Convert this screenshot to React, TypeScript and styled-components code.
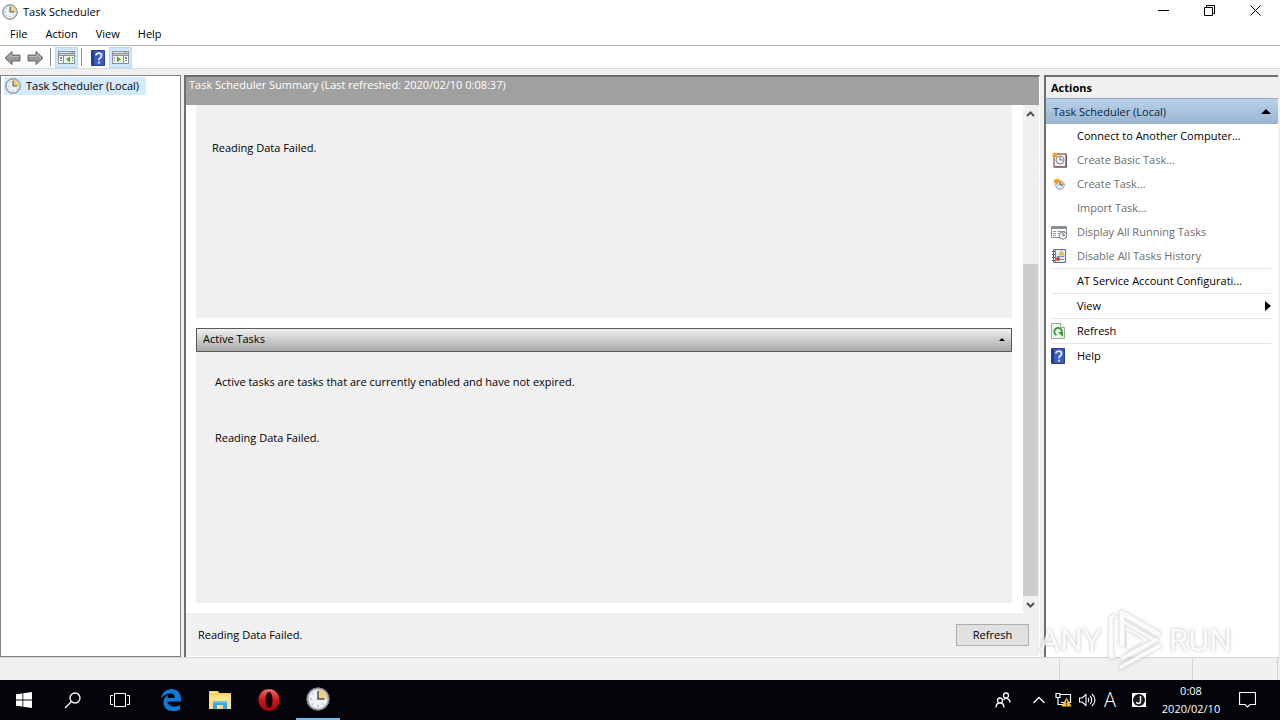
import React from "react";
import styled, { createGlobalStyle } from "styled-components";

const Global = createGlobalStyle`
  *, *::before, *::after { box-sizing: border-box; }
  body { margin: 0; background: #f0f0f0; color: #000; font: 11px/16px "Open Sans", "Noto Sans", sans-serif; }
  button { font: inherit; color: inherit; border: 0; padding: 0; margin: 0; background: none; text-align: left; }
  h1, h2, p, ul { margin: 0; padding: 0; font: inherit; list-style: none; }
  svg { display: block; flex: none; }
`;

const Screen = styled.div`
  position: relative;
  display: flex;
  flex-direction: column;
  min-height: 100vh;
`;

const TitleBar = styled.header`
  display: flex;
  align-items: center;
  gap: 5px;
  height: 24px;
  padding: 0 2px;
  background: #fff;
`;

const WindowTitle = styled.h1`
  flex: 1;
`;

const CaptionGroup = styled.div`
  display: flex;
`;

const CaptionButton = styled.button`
  display: flex;
  align-items: center;
  justify-content: center;
  width: 46px;
  height: 20px;
  margin-bottom: 4px;
`;

const MenuBar = styled.nav`
  display: flex;
  height: 22px;
  padding-left: 1px;
  background: #fff;
  border-bottom: 1px solid #b4b4b4;
`;

const MenuButton = styled.button`
  padding: 0 9px 2px;
`;

const ToolBar = styled.div`
  display: flex;
  align-items: flex-end;
  height: 23px;
  padding-left: 1px;
  background: #fff;
  border-bottom: 1px solid #d8d8d8;
`;

const ToolButton = styled.button<{ $on?: boolean }>`
  display: flex;
  align-items: center;
  justify-content: center;
  width: 23px;
  height: 21px;
  border: 1px solid ${(p) => (p.$on ? "#b4dcf8" : "transparent")};
  background: ${(p) => (p.$on ? "#cde8ff" : "transparent")};
`;

const ToolDivider = styled.span`
  width: 1px;
  height: 18px;
  margin: 0 4px 2px 3px;
  background: #8c8c8c;
`;

const Panes = styled.main`
  display: grid;
  grid-template-columns: 181px minmax(0, 1fr) 234px;
  column-gap: 4px;
  flex: 1;
  padding: 6px 2px 0 0;
`;

const TreePane = styled.aside`
  background: #fff;
  border: 1px solid #828282;
  padding: 1px 3px;
`;

const TreeItem = styled.button`
  display: flex;
  align-items: center;
  gap: 5px;
  height: 18px;
  padding: 0 7px 0 1px;
  background: #d4eaff;
`;

const Summary = styled.section`
  display: flex;
  flex-direction: column;
  border: solid #6e6e6e;
  border-width: 2px 0 0 2px;
  border-right: 1px solid #fff;
  margin-left: -1px;
`;

const SummaryTitle = styled.h2`
  height: 28px;
  padding-left: 3px;
  background: #a0a0a0;
  color: #fff;
`;

const ScrollArea = styled.div`
  display: flex;
  flex: 1;
  background: #fff;
`;

const Sections = styled.div`
  display: grid;
  flex: 1;
  grid-template-rows: 213fr 275fr;
  gap: 10px;
  padding: 0 11px 10px 10px;
`;

const StatusSection = styled.section`
  padding: 35px 16px 0;
  background: #f0f0f0;
`;

const ActiveSection = styled.section`
  background: #f0f0f0;
`;

const SectionHeader = styled.button`
  display: flex;
  align-items: center;
  justify-content: space-between;
  width: 100%;
  height: 24px;
  padding: 0 6px 2px;
  border: 1px solid #5a5a5a;
  background: linear-gradient(#f0f0f0, #a8a8a8);
`;

const SectionBody = styled.div`
  display: grid;
  gap: 40px;
  padding: 22px 19px;
`;

const ScrollBar = styled.div`
  display: flex;
  flex-direction: column;
  width: 16px;
  background: #f0f0f0;
`;

const ScrollButton = styled.button`
  display: flex;
  align-items: center;
  justify-content: center;
  width: 15px;
  height: 17px;
`;

const ScrollTrack = styled.div`
  display: flex;
  flex: 1;
  flex-direction: column;
  justify-content: flex-end;
`;

const ScrollThumb = styled.div`
  width: 15px;
  height: 70%;
  background: #cdcdcd;
`;

const SummaryFooter = styled.footer`
  display: flex;
  align-items: center;
  justify-content: space-between;
  height: 44px;
  padding: 0 10px 0 12px;
  border-bottom: 1px solid #fff;
`;

const PushButton = styled.button`
  width: 73px;
  height: 22px;
  border: 1px solid #adadad;
  background: #e1e1e1;
  text-align: center;
`;

const ActionsPane = styled.aside`
  background: #fff;
  border: solid #6e6e6e;
  border-width: 2px 0 0 2px;
`;

const ActionsTitle = styled.h2`
  height: 22px;
  padding: 3px 5px 2px;
  background: #f0f0f0;
  border-bottom: 1px solid #98a8b4;
  font-weight: 700;
`;

const ActionsGroup = styled.button`
  display: flex;
  align-items: center;
  justify-content: space-between;
  width: 100%;
  height: 25px;
  padding: 0 7px;
  background: linear-gradient(#b9d1ea, #99b4d1);
  color: #0a1e3c;
`;

const ActionRow = styled.li<{ $ruled?: boolean }>`
  margin: 0 7px 0 5px;
  border-top: ${(p) => (p.$ruled ? "1px solid #e4e4e4" : "0")};
`;

const ActionButton = styled.button<{ $dim?: boolean }>`
  display: grid;
  grid-template-columns: 16px 1fr auto;
  align-items: center;
  column-gap: 10px;
  width: 100%;
  height: 24px;
  white-space: nowrap;
  color: ${(p) => (p.$dim ? "#6d6d6d" : "#000")};
`;

const StatusBar = styled.footer`
  display: flex;
  justify-content: flex-end;
  height: 23px;
  border-top: 1px solid #d8d8d8;
`;

const StatusCell = styled.div<{ $w: number }>`
  width: ${(p) => p.$w}px;
  border-left: 1px solid #d2d2d2;
`;

const TaskBar = styled.footer`
  display: flex;
  align-items: center;
  justify-content: space-between;
  height: 40px;
  padding-right: 8px;
  background: #020409;
  color: #fff;
`;

const TaskGroup = styled.div`
  display: flex;
  height: 40px;
`;

const TaskButton = styled.button<{ $w: number; $active?: boolean }>`
  display: flex;
  align-items: center;
  justify-content: center;
  width: ${(p) => p.$w}px;
  height: 40px;
  border-bottom: ${(p) => (p.$active ? "2px solid #76b9ed" : "0")};
`;

const InputMode = styled.span`
  font-size: 20px;
  font-weight: 300;
  line-height: 24px;
`;

const Clock = styled.time`
  width: 62px;
  padding-top: 2px;
  line-height: 18px;
  text-align: center;
`;

const Watermark = styled.div`
  position: absolute;
  right: 48px;
  bottom: 48px;
  display: flex;
  align-items: center;
  gap: 5px;
  color: #fbfbfb;
  font: 32px/64px Roboto, "Liberation Sans", sans-serif;
  filter: drop-shadow(0 0 1px rgba(120, 120, 120, 0.5)) drop-shadow(0 0 2px rgba(120, 120, 120, 0.2));
  opacity: 0.8;
  pointer-events: none;
`;

const ClockIcon = ({ size = 16 }: { size?: number }) => (
  <svg width={size} height={size} viewBox="0 0 24 24">
    <circle cx="12" cy="12" r="11.2" fill="#a9b0b6" stroke="#7c858c" strokeWidth="1" />
    <circle cx="12" cy="12" r="9.4" fill="#eef2f6" />
    <path d="M12 12V2.6A9.4 9.4 0 0 1 21.4 12z" fill="#edcf85" />
    <path d="M12 4v8h6.5" fill="none" stroke="#45505c" strokeWidth="1.5" />
    <path d="M12 20v-2M4 12h2M6.3 6.3l1.2 1.2M6.3 17.7l1.2-1.2M17.7 17.7l-1.2-1.2" stroke="#8d979f" strokeWidth="1" />
  </svg>
);

const ArrowIcon = ({ back }: { back?: boolean }) => (
  <svg width="17" height="16" viewBox="0 0 17 16">
    <path
      d={back ? "M1 8l7-6.5V5h8v6H8v3.5z" : "M16 8L9 1.5V5H1v6h8v3.5z"}
      fill="#989898"
      stroke="#666"
      strokeWidth="1"
    />
    <path d={back ? "M4 7.5l3-3V6.5h8" : "M2 6.5h8V4l4 4"} fill="none" stroke="#bcbcbc" />
  </svg>
);

const PaneIcon = ({ right }: { right?: boolean }) => (
  <svg width="17" height="13" viewBox="0 0 17 14" preserveAspectRatio="none" shapeRendering="crispEdges">
    <path d="M0 0h17v14H0z" fill="#8b9399" />
    <path d="M1 1h11v1H1zM13 1h1v1h-1zM15 1h1v1h-1z" fill="#e8ecee" />
    <path d="M1 3h15v1H1z" fill="#c8ced2" />
    <path d="M1 5h15v8H1z" fill="#fff" />
    <path d={right ? "M1 5h10v8H1z" : "M6 5h10v8H6z"} fill="#eef6ea" />
    <path d={right ? "M11 5h1v8h-1zM2 6h1v1H2zM2 8h1v1H2zM2 10h1v1H2z" : "M5 5h1v8H5zM14 6h1v1h-1zM14 8h1v1h-1zM14 10h1v1h-1z"} fill="#8b9399" />
    <path
      d={right ? "M13 6h2v1h-2zM13 8h2v1h-2zM13 10h2v1h-2z" : "M2 6h2v1H2zM2 8h2v1H2zM2 10h2v1H2z"}
      fill="#647d95"
    />
    <path d={right ? "M5 6l4 3-4 3z" : "M12 6L8 9l4 3z"} fill="#4ba536" shapeRendering="auto" />
  </svg>
);

const HelpIcon = () => (
  <svg width="14" height="16" viewBox="0 0 14 16">
    <path d="M.5.5h13v15H.5z" fill="#3d5cc0" stroke="#2a4090" />
    <path d="M1 1h2v14H1z" fill="#243c8c" />
    <path d="M5 5.5c0-3.3 5.600-3.300 5.600 0C10.600 8 8 7.600 8 10.200" fill="none" stroke="#e4eaff" strokeWidth="1.800" />
    <circle cx="8" cy="12.700" r="1.100" fill="#e4eaff" />
  </svg>
);

const BasicTaskIcon = () => (
  <svg width="16" height="16" viewBox="0 0 16 16">
    <path d="M3 2h12v13H3z" fill="#f4f1ee" stroke="#8f6f6c" strokeWidth="1.4" />
    <path d="M4 14.8h11.5V3" fill="none" stroke="#6a5856" />
    <circle cx="9" cy="8" r="4" fill="#f1f3f5" stroke="#7c858c" />
    <path d="M9 5.5V8h2.5" fill="none" stroke="#50585f" />
    <path d="M3.5 0l1 2 2.2-.5L5.5 3.5l1 2-2.200-.5L2.800 7l-.3-2.300L0 4l2-1.300L1.500.5l1.600.8z" fill="#f0a22c" />
  </svg>
);

const TaskIcon = () => (
  <svg width="16" height="16" viewBox="0 0 16 16">
    <circle cx="9" cy="9" r="4.3" fill="#dbeaf2" stroke="#8ba4b5" />
    <path d="M9 9V4.7A4.3 4.3 0 0 1 13.3 9z" fill="#f3bd57" />
    <path d="M9 6v3h3" fill="none" stroke="#46617a" />
    <path d="M5 2l1.3 1.5L8.5 2.5 8 4.8 10 6 7.5 6.3 6.5 9 5 6.8 2.5 7.5 3.5 5.3 2 3.5l2.5.2z" fill="#f09a20" />
  </svg>
);

const RunningIcon = () => (
  <svg width="17" height="15" viewBox="0 0 17 15">
    <path d="M.5 1.5h15v11H.5z" fill="#fff" stroke="#87919a" />
    <path d="M1 2h14v2H1z" fill="#87919a" />
    <path d="M2 6.5h3M6.5 6.5H14M2 8.5h3M6.5 8.5H9M2 10.5h3" stroke="#8a949c" />
    <circle cx="12" cy="10.5" r="3.7" fill="#f2f5f2" stroke="#78837e" />
    <path d="M12 8v2.5h2" fill="none" stroke="#4e7561" />
  </svg>
);

const HistoryIcon = () => (
  <svg width="16" height="16" viewBox="0 0 16 16">
    <path d="M2.5 1.5h12v13h-12z" fill="#e4edf8" stroke="#5f6e91" />
    <path d="M4.5 2v12" stroke="#7886a5" />
    <path d="M1 3.5h3M1 6.5h3M1 9.5h3M1 12.5h3" stroke="#555f75" />
    <path d="M10.5 2.5l2.5 4.5H8z" fill="#f5d02b" stroke="#bd9a18" strokeWidth=".5" />
    <path d="M6 8.5h7M9 11.5h4" stroke="#7292bd" />
    <circle cx="7" cy="11" r="2" fill="#cf3d32" />
  </svg>
);

const RefreshIcon = () => (
  <svg width="14" height="16" viewBox="0 0 14 16">
    <path d="M.5.5h9l4 4v11H.5z" fill="#edf6ea" stroke="#98ad94" />
    <path d="M9.5.5v4h4" fill="#fff" stroke="#98ad94" />
    <path d="M5.5 12.2a3.8 3.8 0 1 1 4.2-.7" fill="none" stroke="#379a38" strokeWidth="1.8" />
    <path d="M7 9h5v5z" fill="#379a38" />
  </svg>
);

const Triangle = ({ right, size = 10 }: { right?: boolean; size?: number }) => (
  <svg width={right ? 6 : size} height={right ? 10 : size / 2} viewBox={right ? "0 0 6 10" : "0 0 10 5"}>
    <path d={right ? "M0 0l6 5-6 5z" : "M5 0l5 5H0z"} fill="#000" />
  </svg>
);

const Chevron = ({ down }: { down?: boolean }) => (
  <svg width="9" height="6" viewBox="0 0 9 6">
    <path d={down ? "M1 1l3.5 3.5L8 1" : "M1 5l3.5-3.5L8 5"} fill="none" stroke="#505050" strokeWidth="2" />
  </svg>
);

const Line = ({ d, w = 20, h = 20, sw = 1.3 }: { d: string; w?: number; h?: number; sw?: number }) => (
  <svg width={w} height={h} viewBox={`0 0 ${w} ${h}`}>
    <path d={d} fill="none" stroke="currentColor" strokeWidth={sw} />
  </svg>
);

const EdgeIcon = () => (
  <svg width="20" height="22" viewBox="0 0 20 22">
    <path
      d="M0 9.8C1 3.5 5 0 10.5 0 16.5 0 20 4.5 20 10v2.5H6.5c.2 3.5 3.2 5 6.5 5 2.4 0 4.3-.6 6-1.6v4.5C17 21.5 14.5 22 12 22 6 22 2.5 18.5 2.5 13.5c0-3.5 2-6.4 5-7.8-.6.9-1 2-1.1 3.3h7.5c0-2.7-1.5-4.5-4.6-4.5C5.5 4.5 2 6.5 0 9.8z"
      fill="#0c7bdc"
    />
  </svg>
);

const FolderIcon = () => (
  <svg width="22" height="20" viewBox="0 0 22 20">
    <path d="M0 1h9l1.5 2H22v16H0z" fill="#f4cf62" />
    <path d="M0 5h22v14H0z" fill="#fce08a" />
    <path d="M1 2h6v1H1z" fill="#fff3c0" />
    <path d="M4 19v-8h14v8h-4v-4H8v4z" fill="#38a7df" />
    <path d="M4 11h14v2H4z" fill="#6cc6ee" />
  </svg>
);

const OperaIcon = () => (
  <svg width="22" height="22" viewBox="0 0 22 22">
    <defs>
      <linearGradient id="opera" x2="0" y2="1">
        <stop stopColor="#f26a64" />
        <stop offset=".5" stopColor="#d5151b" />
        <stop offset="1" stopColor="#9c0710" />
      </linearGradient>
    </defs>
    <ellipse cx="11" cy="11" rx="10.5" ry="11" fill="url(#opera)" />
    <ellipse cx="11" cy="11" rx="3.6" ry="8" fill="#12040a" />
  </svg>
);

const NetworkIcon = () => (
  <svg width="17" height="16" viewBox="0 0 17 16">
    <path d="M5 2.5h10.5v8H6M1 1.5h4v4H1zM3 5.5v7h6" fill="none" stroke="#fff" strokeWidth="1.2" />
    <path d="M11.5 5.5l5 9h-10z" fill="#f8c524" />
    <path d="M11.5 8.5v3M11.5 12.5v1" stroke="#191300" strokeWidth="1.2" />
  </svg>
);

const ImeIcon = () => (
  <svg width="14" height="14" viewBox="0 0 14 14">
    <path d="M0 0h14v14H0z" fill="#fff" />
    <circle cx="7" cy="7" r="6" fill="#141414" />
    <path d="M8.5 3v5.5c0 2.5-3.5 2.5-4 .5" fill="none" stroke="#fff" strokeWidth="1.5" />
  </svg>
);

const WatermarkMark = () => (
  <svg width="57" height="64" viewBox="0 0 57 64">
    <g fill="none" stroke="#fbfbfb" strokeLinejoin="round">
      <path d="M8 7L4 10v39l4-1" strokeWidth="4" />
      <path d="M15 38V5l38 22" strokeWidth="5" />
      <path d="M15 13l34 20" strokeWidth="3" />
      <path d="M14 51l37-20" strokeWidth="4" />
      <path d="M14 59l38-21" strokeWidth="4" strokeLinecap="round" />
      <path d="M20 24l15 9-15 9z" fill="#fbfbfb" strokeWidth="1" />
    </g>
  </svg>
);

type Action = { label: string; icon?: React.ReactNode; dim?: boolean; ruled?: boolean; more?: boolean };

const actions: Action[] = [
  { label: "Connect to Another Computer..." },
  { label: "Create Basic Task...", icon: <BasicTaskIcon />, dim: true },
  { label: "Create Task...", icon: <TaskIcon />, dim: true },
  { label: "Import Task...", dim: true },
  { label: "Display All Running Tasks", icon: <RunningIcon />, dim: true },
  { label: "Disable All Tasks History", icon: <HistoryIcon />, dim: true },
  { label: "AT Service Account Configurati...", ruled: true },
  { label: "View", ruled: true, more: true },
  { label: "Refresh", icon: <RefreshIcon />, ruled: true },
  { label: "Help", icon: <HelpIcon />, ruled: true },
];

export default function App() {
  return (
    <Screen>
      <Global />
      <TitleBar>
        <ClockIcon />
        <WindowTitle>Task Scheduler</WindowTitle>
        <CaptionGroup>
          <CaptionButton aria-label="Minimize">
            <Line w={11} h={11} sw={1} d="M0 5.5h11" />
          </CaptionButton>
          <CaptionButton aria-label="Restore">
            <Line w={11} h={11} sw={1} d="M.5 2.5h8v8h-8zM2.5 2.5v-2h8v8h-2" />
          </CaptionButton>
          <CaptionButton aria-label="Close">
            <Line w={11} h={11} sw={1} d="M.5.5l10 10M10.5.5l-10 10" />
          </CaptionButton>
        </CaptionGroup>
      </TitleBar>
      <MenuBar>
        {["File", "Action", "View", "Help"].map((m) => (
          <MenuButton key={m}>{m}</MenuButton>
        ))}
      </MenuBar>
      <ToolBar>
        <ToolButton aria-label="Back"><ArrowIcon back /></ToolButton>
        <ToolButton aria-label="Forward"><ArrowIcon /></ToolButton>
        <ToolDivider />
        <ToolButton $on aria-label="Show or hide console tree"><PaneIcon /></ToolButton>
        <ToolDivider />
        <ToolButton aria-label="Help"><HelpIcon /></ToolButton>
        <ToolButton $on aria-label="Show or hide action pane"><PaneIcon right /></ToolButton>
      </ToolBar>
      <Panes>
        <TreePane>
          <TreeItem>
            <ClockIcon />
            Task Scheduler (Local)
          </TreeItem>
        </TreePane>
        <Summary>
          <SummaryTitle>Task Scheduler Summary (Last refreshed: 2020/02/10 0:08:37)</SummaryTitle>
          <ScrollArea>
            <Sections>
              <StatusSection>
                <p>Reading Data Failed.</p>
              </StatusSection>
              <ActiveSection>
                <SectionHeader>
                  Active Tasks
                  <Triangle size={6} />
                </SectionHeader>
                <SectionBody>
                  <p>Active tasks are tasks that are currently enabled and have not expired.</p>
                  <p>Reading Data Failed.</p>
                </SectionBody>
              </ActiveSection>
            </Sections>
            <ScrollBar>
              <ScrollButton aria-label="Scroll up"><Chevron /></ScrollButton>
              <ScrollTrack><ScrollThumb /></ScrollTrack>
              <ScrollButton aria-label="Scroll down"><Chevron down /></ScrollButton>
            </ScrollBar>
          </ScrollArea>
          <SummaryFooter>
            <p>Reading Data Failed.</p>
            <PushButton>Refresh</PushButton>
          </SummaryFooter>
        </Summary>
        <ActionsPane>
          <ActionsTitle>Actions</ActionsTitle>
          <ActionsGroup>
            Task Scheduler (Local)
            <Triangle />
          </ActionsGroup>
          <ul>
            {actions.map((a) => (
              <ActionRow key={a.label} $ruled={a.ruled}>
                <ActionButton $dim={a.dim}>
                  <span>{a.icon}</span>
                  <span>{a.label}</span>
                  {a.more && <Triangle right />}
                </ActionButton>
              </ActionRow>
            ))}
          </ul>
        </ActionsPane>
      </Panes>
      <StatusBar>
        <StatusCell $w={133} />
        <StatusCell $w={85} />
        <StatusCell $w={3} />
      </StatusBar>
      <TaskBar>
        <TaskGroup>
          <TaskButton $w={48} aria-label="Start">
            <svg width="16" height="16" viewBox="0 0 16 16">
              <path d="M0 2.3L6.5 1.4v6.2H0zM7.3 1.3L16 0v7.6H7.3zM0 8.4h6.5v6.2L0 13.7zM7.3 8.4H16V16l-8.7-1.3z" fill="#fff" />
            </svg>
          </TaskButton>
          <TaskButton $w={48} aria-label="Search">
            <Line w={17} h={17} d="M11 1a5 5 0 1 1 0 10a5 5 0 1 1 0-10zM7.5 9.5L1 16" />
          </TaskButton>
          <TaskButton $w={48} aria-label="Task view">
            <Line w={20} h={14} d="M4.5.5h11v13h-11zM3 2.5H.5v9H3M17 2.5h2.5v9H17" sw={1} />
          </TaskButton>
          <TaskButton $w={54} aria-label="Edge"><EdgeIcon /></TaskButton>
          <TaskButton $w={44} aria-label="File Explorer"><FolderIcon /></TaskButton>
          <TaskButton $w={54} aria-label="Opera"><OperaIcon /></TaskButton>
          <TaskButton $w={44} $active aria-label="Task Scheduler"><ClockIcon size={24} /></TaskButton>
        </TaskGroup>
        <TaskGroup>
          <TaskButton $w={42} aria-label="People">
            <Line w={16} h={16} d="M5 6a2.5 2.5 0 1 1 0 5a2.5 2.5 0 1 1 0-5zM1 15.5c0-6 8-6 8 0M11 1a2.5 2.5 0 1 1 0 5a2.5 2.5 0 1 1 0-5zM8.5 8c2-3 6.5-1.5 6.5 2.5" />
          </TaskButton>
          <TaskButton $w={30} aria-label="Show hidden icons">
            <Line w={12} h={8} d="M.5 7L6 1.5 11.5 7" />
          </TaskButton>
          <TaskButton $w={18} aria-label="Network"><NetworkIcon /></TaskButton>
          <TaskButton $w={30} aria-label="Volume">
            <Line w={17} h={14} d="M.5 5h2.5l4-3.5v11L3 9H.5zM9 5c1 1 1 3 0 4M11 3c2.3 2.3 2.3 5.7 0 8M13 1c4 3.5 4 8.5 0 12" sw={1.1} />
          </TaskButton>
          <TaskButton $w={16} aria-label="Input mode"><InputMode>A</InputMode></TaskButton>
          <TaskButton $w={42} aria-label="Input method"><ImeIcon /></TaskButton>
          <Clock>
            0:08<br />2020/02/10
          </Clock>
          <TaskButton $w={50} aria-label="Notifications">
            <Line w={17} h={16} d="M.5.5h16v12h-5.5l-2.5 2.5-2.5-2.5H.5z" sw={1.2} />
          </TaskButton>
        </TaskGroup>
      </TaskBar>
      <Watermark aria-hidden="true">
        <span>ANY</span>
        <WatermarkMark />
        <span>RUN</span>
      </Watermark>
    </Screen>
  );
}
